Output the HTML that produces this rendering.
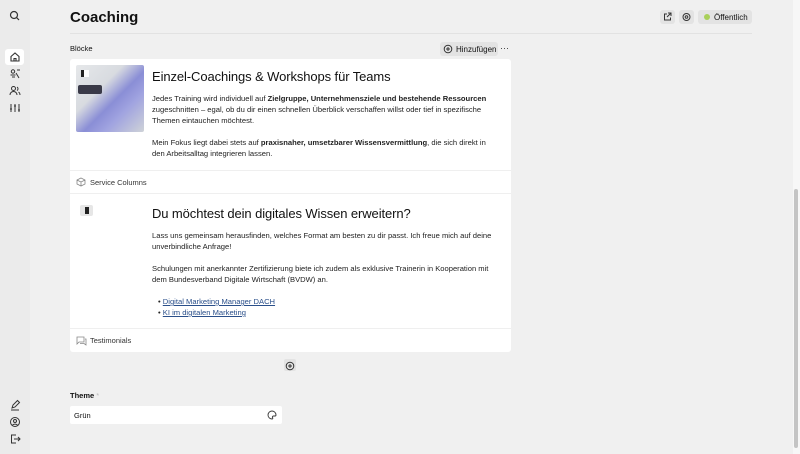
<!DOCTYPE html>
<html><head><meta charset="utf-8"><style>
*{box-sizing:border-box;margin:0;padding:0}
body{width:800px;height:454px;overflow:hidden;background:#f0f0f0;font-family:"Liberation Sans",sans-serif;color:#111;position:relative}
.side{position:absolute;left:0;top:0;width:30px;height:454px;background:#ebebeb}
.ic{position:absolute;left:8px;width:14px;height:14px}
h1{position:absolute;left:70px;top:9px;font-size:15px;font-weight:bold}
.hr{position:absolute;left:70px;top:33px;width:682px;height:1px;background:#e2e2e2}
.btn{position:absolute;background:#e3e3e3;border-radius:3px;font-size:8px;height:14px;top:10px}
.card{position:absolute;left:70px;top:59px;width:441px;height:293px;background:#fff;border-radius:3px}
.t{position:absolute;left:82px;font-size:7.6px;line-height:11px;width:346px;color:#222}
.ttl{position:absolute;left:82px;font-size:13px;color:#111;letter-spacing:-0.1px}
.sep{position:absolute;left:0;width:441px;height:1px;background:#efefef}
.lbl{position:absolute;left:20px;font-size:7.5px;color:#333}
a{color:#2a4f8a;text-decoration:underline}
</style></head><body>
<div class="side">
<svg class="ic" style="top:9px" viewBox="0 0 14 14" fill="none" stroke="#333" stroke-width="1.2"><circle cx="6" cy="6" r="3.5"/><path d="M8.6 8.6 11 11"/></svg>
<div style="position:absolute;left:5px;top:49px;width:19px;height:16px;background:#fff;border-radius:3px"></div>
<svg class="ic" style="top:50px" viewBox="0 0 14 14" fill="none" stroke="#333" stroke-width="1.1"><path d="M3 6.5 7 3l4 3.5V11H3z"/><path d="M6 11V8.5h2V11"/></svg>
<svg class="ic" style="top:67px" viewBox="0 0 14 14" fill="none" stroke="#333" stroke-width="1"><circle cx="5" cy="4.5" r="1.7"/><path d="M2.5 8h5M8 6l3 5M9 3h3M4 10h3"/></svg>
<svg class="ic" style="top:84px" viewBox="0 0 14 14" fill="none" stroke="#333" stroke-width="1"><circle cx="5.5" cy="4.5" r="2"/><path d="M2 11c0-2 1.5-3.5 3.5-3.5S9 9 9 11M9 3a2 2 0 010 3.5M10.5 8c1 .6 1.5 1.7 1.5 3"/></svg>
<svg class="ic" style="top:101px" viewBox="0 0 14 14" fill="none" stroke="#333" stroke-width="1"><path d="M3 3v8M7 3v8M11 3v8M2 8h2M6 5h2M10 9h2"/></svg>
<svg class="ic" style="top:398px" viewBox="0 0 14 14" fill="none" stroke="#333" stroke-width="1"><path d="M4 10l1-3 4.5-4.5 2 2L7 9z M3 12h8"/></svg>
<svg class="ic" style="top:415px" viewBox="0 0 14 14" fill="none" stroke="#333" stroke-width="1"><circle cx="7" cy="7" r="4.5"/><circle cx="7" cy="6" r="1.5"/><path d="M4.5 10.2c1-1.5 4-1.5 5 0"/></svg>
<svg class="ic" style="top:432px" viewBox="0 0 14 14" fill="none" stroke="#333" stroke-width="1"><path d="M8 3H3.5v8H8M6 7h6M10 5l2 2-2 2"/></svg>
</div>
<h1>Coaching</h1>
<div class="btn" style="left:660px;width:15px"><svg width="15" height="14" viewBox="0 0 15 14" fill="none" stroke="#333" stroke-width="1"><path d="M7 4H4.5v6h6V7.5M8 3h3v3M11 3 7 7"/></svg></div>
<div class="btn" style="left:679px;width:15px"><svg width="15" height="14" viewBox="0 0 15 14" fill="none" stroke="#333" stroke-width="1"><circle cx="7.5" cy="7" r="3.5"/><circle cx="7.5" cy="7" r="1.3"/></svg></div>
<div class="btn" style="left:698px;width:54px"><span style="position:absolute;left:6px;top:4px;width:6px;height:6px;border-radius:50%;background:#a9d05a"></span><span style="position:absolute;left:16px;top:3px">Öffentlich</span></div>
<div class="hr"></div>
<div style="position:absolute;left:70px;top:44px;font-size:7.5px">Blöcke</div>
<div class="btn" style="left:440px;top:42px;width:58px"><svg style="position:absolute;left:3px;top:2px" width="10" height="10" viewBox="0 0 10 10" fill="none" stroke="#333" stroke-width="1"><circle cx="5" cy="5" r="3.8"/><path d="M5 3v4M3 5h4"/></svg><span style="position:absolute;left:16px;top:3px">Hinzufügen</span></div>
<div style="position:absolute;left:500px;top:43px;font-size:9px;color:#333">···</div>
<div class="card">
<div style="position:absolute;left:6px;top:6px;width:68px;height:67px;border-radius:2px;background:linear-gradient(135deg,#e6e8ea 0%,#d8dbe0 35%,#8a8ed6 55%,#a0a3e0 70%,#cfd3d8 100%)"></div>
<div style="position:absolute;left:8px;top:26px;width:24px;height:9px;background:#3a3a48;border-radius:2px"></div>
<div style="position:absolute;left:11px;top:11px;width:8px;height:7px;background:#fff"><div style="width:3px;height:7px;background:#222"></div></div>
<div class="ttl" style="top:10px">Einzel-Coachings &amp; Workshops für Teams</div>
<div class="t" style="top:34px">Jedes Training wird individuell auf <b>Zielgruppe, Unternehmensziele und bestehende Ressourcen</b> zugeschnitten – egal, ob du dir einen schnellen Überblick verschaffen willst oder tief in spezifische Themen eintauchen möchtest.</div>
<div class="t" style="top:78px">Mein Fokus liegt dabei stets auf <b>praxisnaher, umsetzbarer Wissensvermittlung</b>, die sich direkt in den Arbeitsalltag integrieren lassen.</div>
<div class="sep" style="top:111px"></div>
<svg style="position:absolute;left:6px;top:118px" width="10" height="10" viewBox="0 0 10 10" fill="none" stroke="#888" stroke-width=".8"><path d="M5 1 9 3v4L5 9 1 7V3zM1 3l4 2 4-2M5 5v4"/></svg>
<div class="lbl" style="top:119px">Service Columns</div>
<div class="sep" style="top:134px"></div>
<div style="position:absolute;left:10px;top:146px;width:13px;height:11px;background:#e6e6e6;border-radius:2px"><div style="position:absolute;left:5px;top:2px;width:4px;height:7px;background:#222"></div></div>
<div class="ttl" style="top:147px">Du möchtest dein digitales Wissen erweitern?</div>
<div class="t" style="top:171px;width:350px">Lass uns gemeinsam herausfinden, welches Format am besten zu dir passt. Ich freue mich auf deine unverbindliche Anfrage!</div>
<div class="t" style="top:204px;width:350px">Schulungen mit anerkannter Zertifizierung biete ich zudem als exklusive Trainerin in Kooperation mit dem Bundesverband Digitale Wirtschaft (BVDW) an.</div>
<div class="t" style="top:237px;left:88px">• <a>Digital Marketing Manager DACH</a><br>• <a>KI im digitalen Marketing</a></div>
<div class="sep" style="top:269px"></div>
<svg style="position:absolute;left:6px;top:277px" width="11" height="10" viewBox="0 0 11 10" fill="none" stroke="#888" stroke-width=".8"><path d="M1 1h7v5H3L1 8zM9 3h1v6l-2-1.5H4"/></svg>
<div class="lbl" style="top:277px">Testimonials</div>
</div>
<div style="position:absolute;left:284px;top:359px;width:12px;height:12px;background:#e3e3e3;border-radius:2px"><svg width="12" height="12" viewBox="0 0 12 12" fill="none" stroke="#333" stroke-width="1"><circle cx="6" cy="6" r="3.8"/><path d="M6 4v4M4 6h4"/></svg></div>
<div style="position:absolute;left:70px;top:391px;font-size:7.5px;font-weight:bold">Theme <span style="color:#bbb;font-weight:normal">*</span></div>
<div style="position:absolute;left:70px;top:406px;width:212px;height:18px;background:#fff;border-radius:2px;font-size:7.5px"><span style="position:absolute;left:4px;top:5px">Grün</span><svg style="position:absolute;left:197px;top:4px" width="10" height="10" viewBox="0 0 10 10" fill="none" stroke="#333" stroke-width=".9"><path d="M5 1a4 4 0 100 8c1 0 1-1 .5-1.5S5.5 6 6.5 6H8a1 1 0 001-1A4 4 0 005 1z"/></svg></div>
<div style="position:absolute;left:793px;top:0;width:7px;height:454px;background:#f7f7f7"></div>
<div style="position:absolute;left:794px;top:189px;width:4px;height:259px;background:#c4c4c4;border-radius:2px"></div>
</body></html>
